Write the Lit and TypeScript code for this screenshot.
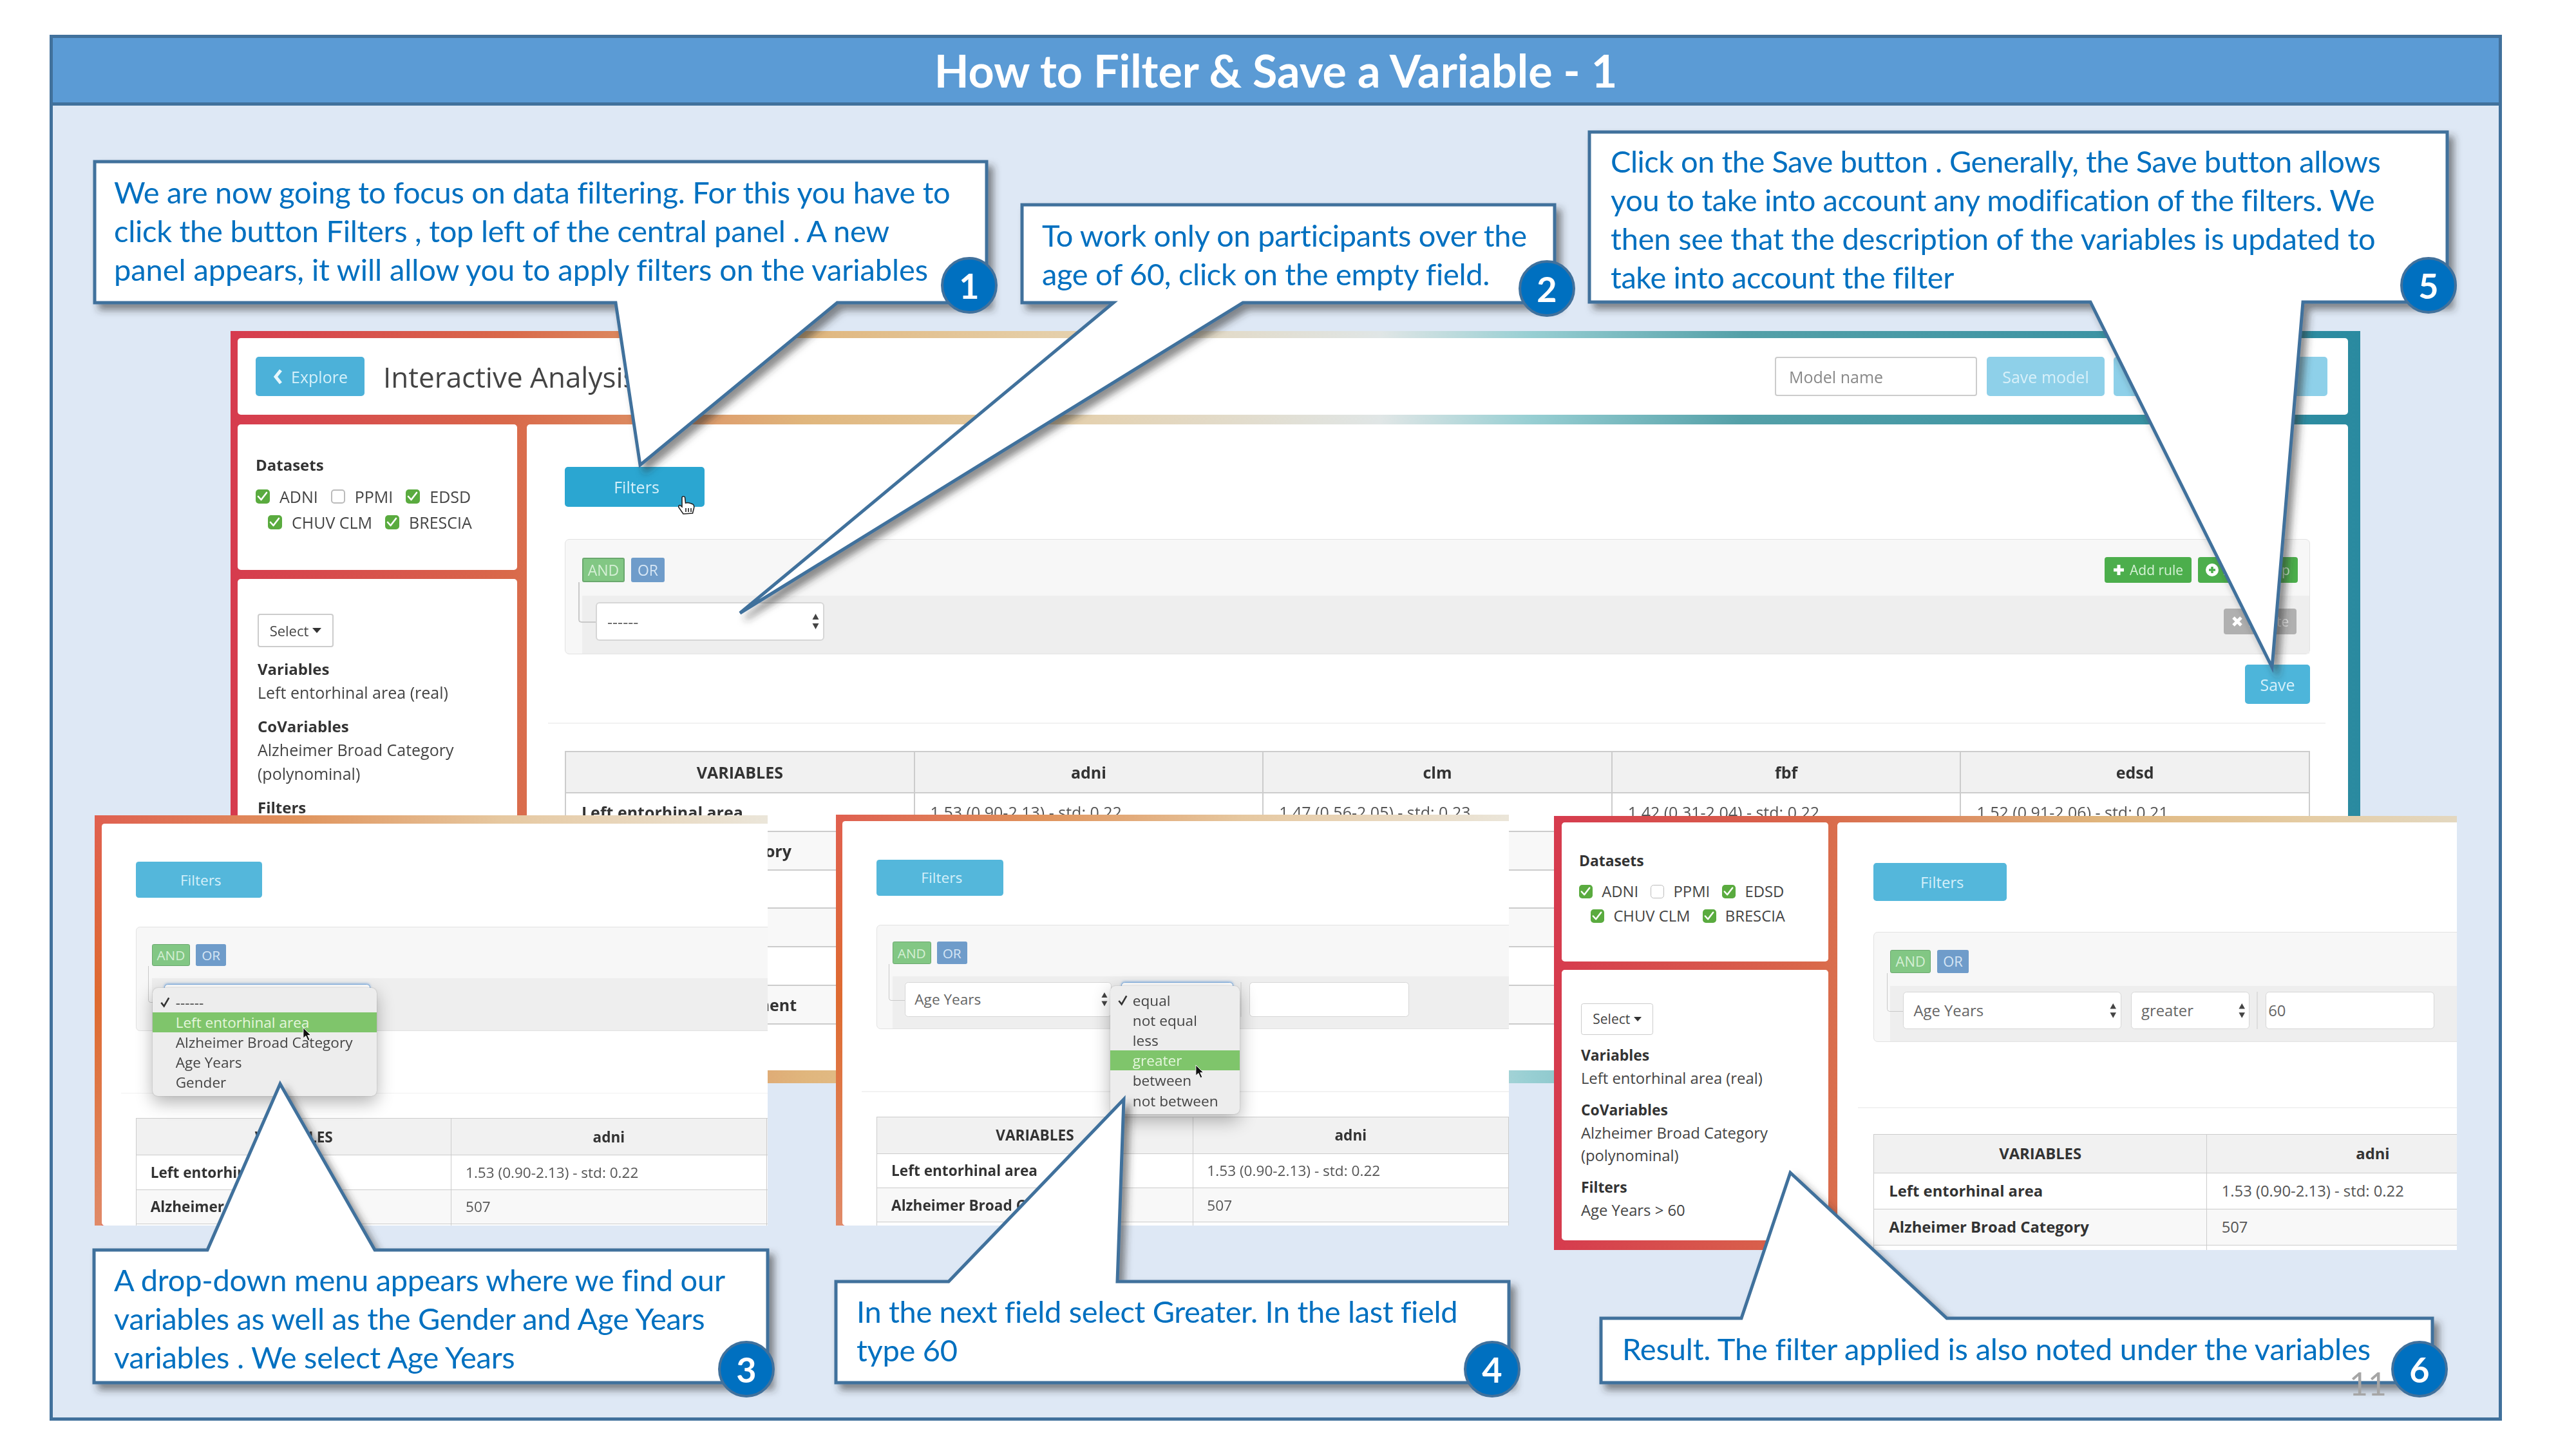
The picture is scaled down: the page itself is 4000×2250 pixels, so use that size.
import { LitElement, html, css, svg, nothing } from "lit";
import { customElement } from "lit/decorators.js";

interface Line {
  text: string;
  track: number;
}

interface Callout {
  box: [number, number, number, number];
  base: [number, number];
  tip: [number, number];
  side: "top" | "bottom";
  textX: number;
  textY: number;
  lines: Line[];
  badge: [number, number];
  num: string;
}

interface Field {
  label: string;
  width: number;
  focus?: boolean;
  menu?: Menu;
}

interface Menu {
  width: number;
  items: string[];
  hot: number;
  cursorX: number;
  cursorY: number;
}

interface Shot {
  x: number;
  y: number;
  w: number;
  h: number;
  scale: number;
  padLeft: number;
  padTop: number;
  padBottom: number;
  crop: boolean;
  topbar: boolean;
  sidebar: boolean;
  hand: boolean;
  applied: boolean;
  fields: Field[];
  input?: string;
}

const VAR_MENU: Menu = {
  width: 385,
  items: ["------", "Left entorhinal area", "Alzheimer Broad Category", "Age Years", "Gender"],
  hot: 1,
  cursorX: 257,
  cursorY: 26,
};

const OP_MENU: Menu = {
  width: 223,
  items: ["equal", "not equal", "less", "greater", "between", "not between"],
  hot: 3,
  cursorX: 146,
  cursorY: 24,
};

const SHOTS: Shot[] = [
  {
    x: 358, y: 514, w: 3307, h: 1168, scale: 1, padLeft: 11, padTop: 11, padBottom: 20,
    crop: false, topbar: true, sidebar: true, hand: true, applied: false,
    fields: [{ label: "------", width: 355 }],
  },
  {
    x: 147, y: 1266, w: 1045, h: 637, scale: 0.903, padLeft: 12, padTop: 14, padBottom: 0,
    crop: true, topbar: false, sidebar: false, hand: false, applied: false,
    fields: [{ label: "", width: 355, focus: true, menu: VAR_MENU }],
  },
  {
    x: 1298, y: 1265, w: 1045, h: 638, scale: 0.905, padLeft: 11, padTop: 11, padBottom: 0,
    crop: true, topbar: false, sidebar: false, hand: false, applied: false,
    fields: [
      { label: "Age Years", width: 355 },
      { label: "", width: 193, focus: true, menu: OP_MENU },
    ],
    input: "",
  },
  {
    x: 2413, y: 1267, w: 1402, h: 674, scale: 0.953, padLeft: 13, padTop: 11, padBottom: 0,
    crop: false, topbar: false, sidebar: true, hand: false, applied: true,
    fields: [
      { label: "Age Years", width: 355 },
      { label: "greater", width: 193 },
    ],
    input: "60",
  },
];

const CALLOUTS: Callout[] = [
  {
    box: [147, 251, 1532, 470], base: [956, 1300], tip: [994, 722], side: "bottom",
    textX: 177, textY: 268,
    lines: [
      { text: "We are now going to focus on data filtering. For this you have to", track: -0.31 },
      { text: "click the button Filters , top left of the central panel . A new", track: -0.27 },
      { text: "panel appears, it will allow you to apply filters on the variables", track: -0.08 },
    ],
    badge: [1461, 399], num: "1",
  },
  {
    box: [1587, 318, 2414, 470], base: [1729, 1930], tip: [1149, 952], side: "bottom",
    textX: 1618, textY: 335,
    lines: [
      { text: "To work only on participants over the", track: -0.3 },
      { text: "age of 60, click on the empty field.", track: -0.3 },
    ],
    badge: [2358, 404], num: "2",
  },
  {
    box: [146, 1941, 1192, 2147], base: [322, 582], tip: [435, 1683], side: "top",
    textX: 177, textY: 1957,
    lines: [
      { text: "A drop-down menu appears where we find our", track: -0.25 },
      { text: "variables as well as the Gender and Age Years", track: -0.3 },
      { text: "variables . We select Age Years", track: -0.25 },
    ],
    badge: [1115, 2082], num: "3",
  },
  {
    box: [1298, 1990, 2343, 2147], base: [1473, 1735], tip: [1745, 1707], side: "top",
    textX: 1330, textY: 2006,
    lines: [
      { text: "In the next field select Greater. In the last field", track: -0.35 },
      { text: "type 60", track: -0.3 },
    ],
    badge: [2273, 2082], num: "4",
  },
  {
    box: [2468, 205, 3800, 469], base: [3246, 3576], tip: [3528, 1036], side: "bottom",
    textX: 2501, textY: 220,
    lines: [
      { text: "Click on the Save button . Generally, the Save button allows", track: -0.5 },
      { text: "you to take into account any modification of the filters. We", track: -0.38 },
      { text: "then see that the description of the variables is updated to", track: -0.2 },
      { text: "take into account the filter", track: -0.42 },
    ],
    badge: [3727, 399], num: "5",
  },
  {
    box: [2486, 2047, 3777, 2147], base: [2704, 3023], tip: [2780, 1821], side: "top",
    textX: 2519, textY: 2064,
    lines: [{ text: "Result. The filter applied is also noted under the variables", track: -0.15 }],
    badge: [3713, 2082], num: "6",
  },
];

const TABLE_ROWS = [
  ["Left entorhinal area", "1.53 (0.90-2.13) - std: 0.22", "1.47 (0.56-2.05) - std: 0.23", "1.42 (0.31-2.04) - std: 0.22", "1.52 (0.91-2.06) - std: 0.21"],
  ["Alzheimer Broad Category", "507", "", "", ""],
  ["", "", "", "", ""],
  ["", "", "", "", ""],
  ["", "", "", "", ""],
  ["Mild Cognitive Impairment", "", "", "", ""],
];

function bubblePoints(c: Callout) {
  const [x0, y0, x1, y1] = c.box;
  const [b0, b1] = c.base;
  const [tx, ty] = c.tip;
  if (c.side === "bottom") {
    return `${x0},${y0} ${x1},${y0} ${x1},${y1} ${b1},${y1} ${tx},${ty} ${b0},${y1} ${x0},${y1}`;
  }
  return `${x0},${y0} ${b0},${y0} ${tx},${ty} ${b1},${y0} ${x1},${y0} ${x1},${y1} ${x0},${y1}`;
}

const checkIcon = svg`<path d="M4 11 L8.5 16 L17 5" fill="none" stroke="#fff" stroke-width="2.6" stroke-linecap="round" stroke-linejoin="round"/>`;

@customElement("app-root")
export class AppRoot extends LitElement {
  static styles = css`
    :host {
      display: block;
      position: relative;
      width: 4000px;
      height: 2250px;
      background: #fff;
      overflow: hidden;
      font-family: "Lato", "Liberation Sans", sans-serif;
    }

    .page {
      padding: 54px 115px 0 77px;
    }

    .slide {
      height: 2152px;
      box-sizing: border-box;
      border: 5px solid #41719c;
      background: #dee8f5;
    }

    .slide-head {
      height: 105px;
      box-sizing: border-box;
      background: #5b9bd5;
      border-bottom: 5px solid #41719c;
      display: flex;
      align-items: center;
      justify-content: center;
      color: #fff;
      font-weight: 700;
      font-size: 70px;
    }

    .canvas {
      position: absolute;
      inset: 0;
    }

    .shot {
      position: absolute;
      overflow: hidden;
      font-family: "Open Sans", "Liberation Sans", sans-serif;
      color: #444;
      font-size: 25px;
      filter: blur(0.6px);
    }

    .sheet {
      width: 3307px;
      height: 100%;
      box-sizing: border-box;
      background: linear-gradient(90deg, #d63b4e 0, #d9694a 13%, #e0b67d 27%, #e5cda5 37.5%, #e0e6e6 54%, #98cfd3 61%, #54a0a8 71%, #2a8aa0 100%);
      display: flex;
      flex-direction: column;
      gap: 15px;
    }

    .sheet.crop {
      background:
        linear-gradient(180deg, #e0604f, #de6b30 45%, #e08a68) left top / 12px 100% no-repeat,
        linear-gradient(90deg, #df5f50, #e0935c 30%, #e6c8a0 60%, #ebe6da 100%) left top / 1160px 100% no-repeat;
    }

    .card {
      background: #fff;
      border-radius: 5px;
    }

    .topbar {
      width: 3277px;
      height: 119px;
      box-sizing: border-box;
      padding: 0 32px 0 28px;
      flex: none;
      display: flex;
      align-items: center;
    }

    .btn {
      display: flex;
      align-items: center;
      justify-content: center;
      box-sizing: border-box;
      color: #fff;
      border-radius: 5px;
      white-space: nowrap;
    }

    .explore {
      width: 169px;
      height: 61px;
      gap: 13px;
      padding-left: 2px;
      background: #4cb1d9;
      color: #d5f0fa;
    }

    .page-title {
      margin-left: 29px;
      font-size: 44px;
      color: #444;
      flex: 1;
    }

    .model-name {
      width: 314px;
      height: 61px;
      box-sizing: border-box;
      border: 2px solid #ccc;
      border-radius: 4px;
      padding-left: 20px;
      display: flex;
      align-items: center;
      color: #888;
    }

    .save-model {
      width: 183px;
      height: 61px;
      margin-left: 15px;
      background: #8ed0e9;
      color: #d8f0f9;
    }

    .run {
      width: 332px;
      height: 61px;
      margin-left: 14px;
      gap: 24px;
      background: #8ed0e9;
      color: #d8f0f9;
    }

    .body {
      display: flex;
      gap: 15px;
      flex: 1;
      min-height: 0;
    }

    .sidebar {
      width: 434px;
      flex: none;
      display: flex;
      flex-direction: column;
      gap: 14px;
    }

    .datasets {
      height: 226px;
      box-sizing: border-box;
      padding: 44px 0 0 28px;
    }

    .heading {
      font-weight: 700;
      color: #333;
      line-height: 37px;
      font-size: 24px;
    }

    .check-row {
      display: flex;
      align-items: center;
      height: 40px;
      gap: 20px;
      white-space: nowrap;
    }

    .datasets .heading {
      margin-bottom: 11px;
    }

    .check-row.second {
      padding-left: 19px;
    }

    .check {
      display: flex;
      align-items: center;
      gap: 15px;
    }

    .box {
      width: 22px;
      height: 22px;
      box-sizing: border-box;
      border-radius: 5px;
      background: #5aab3f;
      flex: none;
    }

    .box.off {
      background: #fff;
      border: 2px solid #bbb;
    }

    .box svg {
      display: block;
      width: 22px;
      height: 22px;
    }

    .vars {
      height: 441px;
      box-sizing: border-box;
      padding: 54px 0 0 31px;
      flex: none;
    }

    .dropdown {
      width: 118px;
      height: 52px;
      box-sizing: border-box;
      border: 2px solid #ccc;
      border-radius: 4px;
      display: flex;
      align-items: center;
      justify-content: center;
      gap: 6px;
      margin-bottom: 15px;
      font-size: 22px;
    }

    .caret {
      width: 0;
      height: 0;
      border-left: 7px solid transparent;
      border-right: 7px solid transparent;
      border-top: 8px solid #333;
    }

    .vars .value {
      line-height: 37px;
      margin-bottom: 15px;
    }

    .main {
      width: 2828px;
      flex: none;
      box-sizing: border-box;
      padding: 66px 0 0 59px;
    }

    .filters {
      position: relative;
      width: 217px;
      height: 62px;
      background: #54b7db;
      color: #d5f0fa;
      padding-left: 6px;
    }

    .filters.active {
      background: #2ba6d1;
    }

    .hand {
      position: absolute;
      left: 174px;
      top: 44px;
      width: 28px;
      height: 31px;
    }

    .rules {
      width: 2710px;
      height: 179px;
      box-sizing: border-box;
      margin-top: 50px;
      padding: 28px 0 0 26px;
      border: 1px solid #e2e2e2;
      border-radius: 7px;
      background: #f7f7f7;
    }

    .rules-top {
      display: flex;
      align-items: center;
      height: 38px;
      padding-right: 18px;
    }

    .toggle {
      height: 38px;
      font-size: 23px;
      border-radius: 3px;
    }

    .and {
      width: 66px;
      background: #82c784;
      border: 2px solid #6aa86e;
      color: #d5efd5;
    }

    .or {
      width: 52px;
      margin-left: 10px;
      background: #6f9cca;
      color: #d6e6f5;
    }

    .add {
      height: 40px;
      background: #4cae4c;
      gap: 8px;
      font-size: 21px;
      border-radius: 4px;
      color: #d6f2d6;
    }

    .add-rule {
      margin-left: auto;
      width: 135px;
    }

    .add-group {
      width: 155px;
      margin-left: 10px;
    }

    .rule {
      position: relative;
      height: 90px;
      box-sizing: border-box;
      margin-top: 21px;
      padding: 10px 20px 0 21px;
      background: #eee;
      display: flex;
      align-items: flex-start;
    }

    .rule::before {
      content: "";
      position: absolute;
      left: -6px;
      top: -21px;
      width: 27px;
      height: 63px;
      box-sizing: border-box;
      border-left: 2px solid #c9c9c9;
      border-bottom: 2px solid #c9c9c9;
      border-bottom-left-radius: 5px;
    }

    .sel {
      position: relative;
      height: 60px;
      box-sizing: border-box;
      flex: none;
      border: 2px solid #d6d6d6;
      border-radius: 6px;
      background: #fff;
      padding: 0 6px 0 16px;
      display: flex;
      align-items: center;
      justify-content: space-between;
      color: #666;
    }

    .sel + .sel {
      margin-left: 16px;
    }

    .sel.focus {
      border-color: #7cade0;
      box-shadow: 0 -1px 4px rgba(90, 150, 220, 0.6);
    }

    .sel svg {
      width: 11px;
      height: 26px;
      flex: none;
    }

    .divider {
      width: 2px;
      height: 60px;
      margin: 0 13px 0 12px;
      background: #ddd;
      flex: none;
    }

    .value-box {
      width: 274px;
      height: 60px;
      box-sizing: border-box;
      flex: none;
      border: 2px solid #d6d6d6;
      border-radius: 6px;
      background: #fff;
      padding-left: 3px;
      display: flex;
      align-items: center;
      color: #666;
    }

    .delete {
      width: 113px;
      height: 40px;
      margin: 10px 0 0 auto;
      gap: 8px;
      background: #b0b0b0;
      border-radius: 4px;
      font-size: 21px;
      color: #e2e2e2;
    }

    .menu {
      position: absolute;
      left: -20px;
      top: 6px;
      z-index: 2;
      box-sizing: border-box;
      padding: 7px 0 6px;
      background: #ededed;
      border-radius: 9px;
      box-shadow: 0 10px 30px rgba(0, 0, 0, 0.3), 0 0 2px rgba(0, 0, 0, 0.25);
      color: #444;
    }

    .menu-item {
      position: relative;
      height: 34.5px;
      line-height: 34.5px;
      padding-left: 39px;
      white-space: nowrap;
    }

    .menu-item.hot {
      background: #7fc56b;
      color: #e4f6dc;
    }

    .sel .tick {
      position: absolute;
      left: 10px;
      top: 5px;
      width: 24px;
      height: 24px;
    }

    .sel .arrow {
      position: absolute;
      width: 16px;
      height: 24px;
    }

    .save {
      width: 101px;
      height: 61px;
      margin: 16px 0 0 2609px;
      background: #4db5da;
      color: #d5f0fa;
    }

    .rule-line {
      width: 2760px;
      height: 2px;
      margin: 29px 0 0 -26px;
      background: #f2f2f2;
    }

    table {
      width: 2710px;
      margin-top: 42px;
      border-collapse: collapse;
      table-layout: fixed;
      color: #555;
    }

    th,
    td {
      border: 2px solid #ccc;
      padding: 0 24px;
      text-align: left;
      white-space: nowrap;
      overflow: visible;
    }

    th {
      height: 62px;
      text-align: center;
      background: #f1f1f1;
      color: #333;
    }

    td {
      height: 57.8px;
    }

    td.name {
      font-weight: 700;
      color: #333;
    }

    tr.odd td {
      background: #f8f8f8;
    }

    .bubbles {
      position: absolute;
      inset: 0;
      width: 4000px;
      height: 2250px;
    }

    .bubble {
      fill: #fff;
      stroke: #41719c;
      stroke-width: 5;
      stroke-linejoin: miter;
    }

    .bubble-text {
      position: absolute;
      color: #0070c0;
      font-size: 47px;
      line-height: 60px;
      white-space: nowrap;
    }

    .badge {
      position: absolute;
      width: 88px;
      height: 88px;
      box-sizing: border-box;
      border: 4px solid #41719c;
      border-radius: 50%;
      background: #0070c0;
      color: #fff;
      font-weight: 700;
      font-size: 54px;
      display: flex;
      align-items: center;
      justify-content: center;
    }

    .page-no {
      position: absolute;
      left: 3648px;
      top: 2118px;
      font-size: 50px;
      line-height: 60px;
      color: #a6a6a6;
    }
  `;

  private renderCheck(label: string, on = true) {
    return html`<span class="check">
      <span class="box ${on ? "" : "off"}">
        ${on ? html`<svg viewBox="0 0 22 22">${checkIcon}</svg>` : nothing}
      </span>
      ${label}
    </span>`;
  }

  private renderSidebar(shot: Shot) {
    return html`<div class="sidebar">
      <div class="card datasets">
        <div class="heading">Datasets</div>
        <div class="check-row">
          ${this.renderCheck("ADNI")}${this.renderCheck("PPMI", false)}${this.renderCheck("EDSD")}
        </div>
        <div class="check-row second">
          ${this.renderCheck("CHUV CLM")}${this.renderCheck("BRESCIA")}
        </div>
      </div>
      <div class="card vars">
        <div class="dropdown">Select <span class="caret"></span></div>
        <div class="heading">Variables</div>
        <div class="value">Left entorhinal area (real)</div>
        <div class="heading">CoVariables</div>
        <div class="value">Alzheimer Broad Category<br />(polynominal)</div>
        <div class="heading">Filters</div>
        ${shot.applied ? html`<div class="value">Age Years &gt; 60</div>` : nothing}
      </div>
    </div>`;
  }

  private renderMenu(menu: Menu) {
    return html`<div class="menu" style="width:${menu.width}px">
      ${menu.items.map(
        (item, i) => html`<div class="menu-item ${i === menu.hot ? "hot" : ""}">
          ${i === 0
            ? html`<svg class="tick" viewBox="0 0 20 20">
                <path d="M4 11 L8 16 L15 4" fill="none" stroke="#333" stroke-width="2.4" />
              </svg>`
            : nothing}
          ${item}
          ${i === menu.hot
            ? html`<svg
                class="arrow"
                style="left:${menu.cursorX}px;top:${menu.cursorY}px"
                viewBox="0 0 16 24"
              >
                <path
                  d="M1 1 L1 19 L5.5 15 L9 23 L12 21.5 L8.5 14 L14 14 Z"
                  fill="#111"
                  stroke="#fff"
                  stroke-width="1"
                />
              </svg>`
            : nothing}
        </div>`
      )}
    </div>`;
  }

  private renderRule(shot: Shot) {
    return html`<div class="rule">
      ${shot.fields.map(
        (f) => html`<div class="sel ${f.focus ? "focus" : ""}" style="width:${f.width}px">
          <span>${f.label}</span>
          ${f.focus
            ? nothing
            : html`<svg viewBox="0 0 11 26">
                <path d="M5.5 1 L10.5 10 L0.5 10 Z M5.5 25 L10.5 16 L0.5 16 Z" fill="#444" />
              </svg>`}
          ${f.menu ? this.renderMenu(f.menu) : nothing}
        </div>`
      )}
      ${shot.input !== undefined
        ? html`<div class="divider"></div>
            <div class="value-box">${shot.input}</div>`
        : nothing}
      <div class="btn delete">
        <svg width="18" height="18" viewBox="0 0 18 18">
          <path d="M3 3 L15 15 M15 3 L3 15" stroke="#fff" stroke-width="5" />
        </svg>
        Delete
      </div>
    </div>`;
  }

  private renderMain(shot: Shot) {
    return html`<div class="card main">
      <div class="btn filters ${shot.hand ? "active" : ""}">
        Filters
        ${shot.hand
          ? html`<svg class="hand" viewBox="0 0 28 31">
              <path
                d="M8 3 Q10.5 0.5 12.5 3 L13.5 12 L17 11.5 L21 12.5 L25 14 Q27.5 16 26.5 20 L24.5 28 L10 29 L3 19 Q2 15.5 5 15.5 L8 18 Z"
                fill="#fff"
                stroke="#222"
                stroke-width="1.6"
              />
              <path d="M14 20 V26 M18 20 V26 M22 20 V26" stroke="#222" stroke-width="1.6" />
            </svg>`
          : nothing}
      </div>
      <div class="rules">
        <div class="rules-top">
          <div class="btn toggle and">AND</div>
          <div class="btn toggle or">OR</div>
          <div class="btn add add-rule">
            <svg width="18" height="18" viewBox="0 0 18 18">
              <path d="M9 1 V17 M1 9 H17" stroke="#fff" stroke-width="5" />
            </svg>
            Add rule
          </div>
          <div class="btn add add-group">
            <svg width="20" height="20" viewBox="0 0 20 20">
              <circle cx="10" cy="10" r="10" fill="#fff" />
              <path d="M10 5 V15 M5 10 H15" stroke="#4cae4c" stroke-width="3.5" />
            </svg>
            Add group
          </div>
        </div>
        ${this.renderRule(shot)}
      </div>
      <div class="btn save">Save</div>
      <div class="rule-line"></div>
      <table>
        <thead>
          <tr>
            <th>VARIABLES</th>
            <th>adni</th>
            <th>clm</th>
            <th>fbf</th>
            <th>edsd</th>
          </tr>
        </thead>
        <tbody>
          ${TABLE_ROWS.map(
            (row, r) => html`<tr class="${r % 2 ? "odd" : ""}">
              ${row.map((cell, c) => html`<td class="${c === 0 ? "name" : ""}">${cell}</td>`)}
            </tr>`
          )}
        </tbody>
      </table>
    </div>`;
  }

  private renderTopbar() {
    return html`<div class="card topbar">
      <div class="btn explore">
        <svg width="14" height="24" viewBox="0 0 14 24">
          <path d="M11 2 L3 12 L11 22" fill="none" stroke="#e8f7fc" stroke-width="5" />
        </svg>
        Explore
      </div>
      <div class="page-title">Interactive Analysis</div>
      <div class="model-name">Model name</div>
      <div class="btn save-model">Save model</div>
      <div class="btn run">
        Run Experiment
        <svg width="12" height="20" viewBox="0 0 12 20">
          <path d="M2 2 L9 10 L2 18" fill="none" stroke="#e8f7fc" stroke-width="4" />
        </svg>
      </div>
    </div>`;
  }

  private renderShot(shot: Shot) {
    return html`<div
      class="shot"
      style="left:${shot.x}px;top:${shot.y}px;width:${shot.w}px;height:${shot.h}px"
    >
      <div
        class="sheet ${shot.crop ? "crop" : ""}"
        style="zoom:${shot.scale};padding:${shot.padTop}px 0 ${shot.padBottom}px ${shot.padLeft}px"
      >
        ${shot.topbar ? this.renderTopbar() : nothing}
        <div class="body">
          ${shot.sidebar ? this.renderSidebar(shot) : nothing}${this.renderMain(shot)}
        </div>
      </div>
    </div>`;
  }

  private renderCallout(c: Callout) {
    return html`<svg class="bubbles" viewBox="0 0 4000 2250">
        <polygon class="bubble" points=${bubblePoints(c)} filter="url(#bubble-shadow)" />
      </svg>
      <div class="bubble-text" style="left:${c.textX}px;top:${c.textY}px">
        ${c.lines.map((l) => html`<div style="letter-spacing:${l.track}px">${l.text}</div>`)}
      </div>
      <div class="badge" style="left:${c.badge[0]}px;top:${c.badge[1]}px">${c.num}</div>`;
  }

  render() {
    return html`<div class="page">
        <div class="slide">
          <div class="slide-head">How to Filter &amp; Save a Variable - 1</div>
        </div>
      </div>
      <div class="canvas">
        ${SHOTS.map((s) => this.renderShot(s))}
        <svg class="bubbles" viewBox="0 0 4000 2250">
          <defs>
            <filter id="bubble-shadow" filterUnits="userSpaceOnUse" x="0" y="0" width="4000" height="2250">
              <feDropShadow dx="8" dy="9" stdDeviation="6" flood-color="#333" flood-opacity="0.55" />
            </filter>
          </defs>
        </svg>
        ${CALLOUTS.map((c) => this.renderCallout(c))}
        <div class="page-no">11</div>
      </div>`;
  }
}
